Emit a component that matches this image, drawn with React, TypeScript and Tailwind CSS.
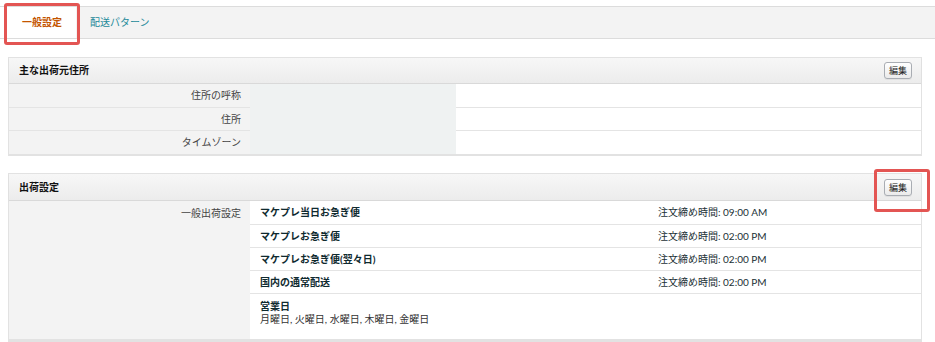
import React from "react";

const font = { fontFamily: 'Lato, "Noto Sans CJK JP", sans-serif' };

function EditButton() {
  return (
    <button className="h-[17px] w-[28px] rounded-[3px] border border-[#a9adb3] bg-gradient-to-b from-[#ffffff] to-[#ebebeb] text-[9px] leading-none text-[#222] shadow-[0_1px_0_rgba(0,0,0,0.05)]">
      編集
    </button>
  );
}

function PanelHeader({ title, height }: { title: string; height: string }) {
  return (
    <div className={`flex ${height} items-center justify-between border-b border-[#d9d9d9] bg-gradient-to-b from-[#f7f7f7] to-[#ececec] pl-[10px] pr-[9px] shadow-[0_1px_1px_rgba(0,0,0,0.06)]`}>
      <span className="text-[10px] font-bold text-[#111]">{title}</span>
      <EditButton />
    </div>
  );
}

const addrRows = [
  { label: "住所の呼称", h: "h-[24px]" },
  { label: "住所", h: "h-[23px]" },
  { label: "タイムゾーン", h: "h-[23px]" },
];

const shipRows = [
  { name: "マケプレ当日お急ぎ便", time: "注文締め時間: 09:00 AM", h: "h-[24px]" },
  { name: "マケプレお急ぎ便", time: "注文締め時間: 02:00 PM", h: "h-[23px]" },
  { name: "マケプレお急ぎ便(翌々日)", time: "注文締め時間: 02:00 PM", h: "h-[23px]" },
  { name: "国内の通常配送", time: "注文締め時間: 02:00 PM", h: "h-[23px]" },
];

export default function App() {
  return (
    <div className="relative h-[342px] w-[935px] overflow-hidden bg-white" style={font}>
      {/* Tabs */}
      <div className="mt-[6px] flex h-[33px] border-y border-[#dcdcdc] pl-[8px]">
        <div className="flex w-[68px] items-center justify-center bg-white text-[10px] font-bold text-[#c45500]">
          一般設定
        </div>
        <div className="flex flex-1 items-center bg-[#f3f3f3] pl-[14px] text-[10px] text-[#1d8a99]">
          配送パターン
        </div>
      </div>

      {/* Panel 1 */}
      <div className="ml-[8px] mt-[18px] w-[914px] border border-[#e2e2e2] border-b-[2px]">
        <PanelHeader title="主な出荷元住所" height="h-[26px]" />
        {addrRows.map((r, i) => (
          <div key={r.label} className={`flex ${r.h} text-[10px]`}>
            <div className={`flex w-[241px] items-center justify-end bg-[#f3f3f3] pr-[9px] text-[#444] ${i < 2 ? "border-b border-[#e4e4e4]" : ""}`}>
              {r.label}
            </div>
            <div className="w-[206px] bg-[#eff2f2]" />
            <div className={`flex-1 bg-white ${i < 2 ? "border-b border-[#e4e4e4]" : ""}`} />
          </div>
        ))}
      </div>

      {/* Panel 2 */}
      <div className="ml-[8px] mt-[17px] w-[914px] border border-[#e2e2e2] border-b-[3px]">
        <PanelHeader title="出荷設定" height="h-[27px]" />
        <div className="flex">
          <div className="w-[241px] bg-[#f3f3f3]">
            <div className="flex h-[24px] items-center justify-end pr-[9px] text-[10px] text-[#444]">
              一般出荷設定
            </div>
          </div>
          <div className="flex-1 bg-white">
            {shipRows.map((r) => (
              <div key={r.name} className={`flex ${r.h} items-center border-b border-[#e4e4e4] pl-[10px] text-[10px]`}>
                <span className="w-[398px] font-bold text-[#0f2a2f]">{r.name}</span>
                <span className="text-[#1b3136]">{r.time}</span>
              </div>
            ))}
            <div className="h-[45px] pl-[10px] pt-[6px] text-[10px] leading-[13px]">
              <div className="font-bold text-[#0f2a2f]">営業日</div>
              <div className="text-[#333]">月曜日, 火曜日, 水曜日, 木曜日, 金曜日</div>
            </div>
          </div>
        </div>
      </div>

      {/* Annotations */}
      <div className="pointer-events-none absolute left-[4px] top-[3px] h-[42px] w-[76px] rounded-[3px] border-[3px] border-[#e35553]" />
      <div className="pointer-events-none absolute left-[874px] top-[169px] h-[43px] w-[56px] rounded-[3px] border-[3px] border-[#e35553]" />
    </div>
  );
}
